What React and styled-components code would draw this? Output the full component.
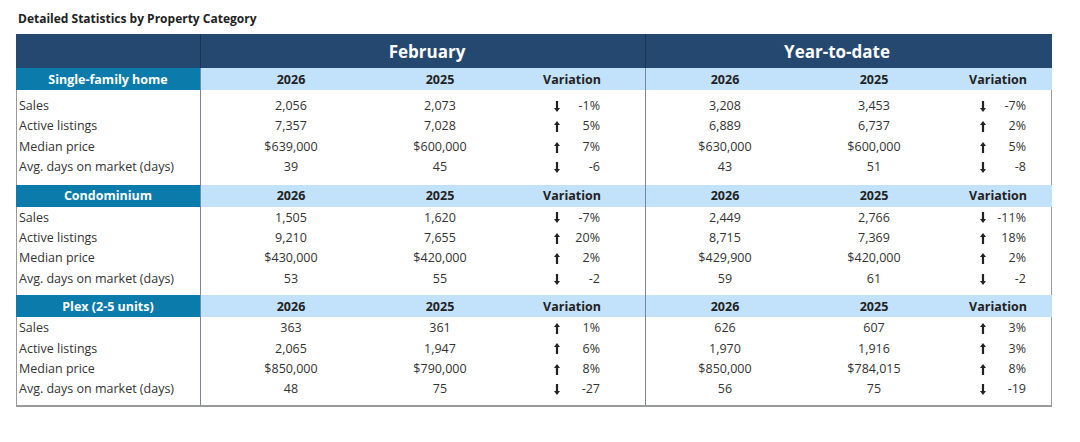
import React from "react";
import styled, { createGlobalStyle } from "styled-components";

const Global = createGlobalStyle`
  html, body { margin: 0; padding: 0; background: #ffffff; }
  body { font-family: "Open Sans", "Noto Sans", sans-serif; color: #333; }
`;

const Page = styled.div`
  padding: 10px 0 0 16px;
`;

const Title = styled.h2`
  margin: 0 0 6px 2px;
  font-size: 12px;
  line-height: 18px;
  font-weight: 700;
  color: #222;
`;

const COLS = "185px 180px 118px 147px 158px 140px 108px";

const Table = styled.div`
  width: 1036px;
  border-left: 1px solid #9a9a9a;
  border-right: 1px solid #9a9a9a;
  border-bottom: 2px solid #9a9a9a;
  box-sizing: border-box;
`;

const Grid = styled.div`
  display: grid;
  grid-template-columns: ${COLS};
  margin: 0 -1px;
`;

const TopCell = styled.div`
  grid-column: ${(p) => p.$span};
  height: 34px;
  background: #254870;
  color: #fff;
  font-size: 17px;
  font-weight: 700;
  display: flex;
  align-items: center;
  justify-content: center;
  padding-left: ${(p) => p.$pl || 0}px;
  padding-right: ${(p) => p.$pr || 0}px;
  border-right: ${(p) => (p.$divider ? "1.5px solid #1a3454" : "none")};
  box-sizing: border-box;
`;

const CatCell = styled.div`
  height: 22px;
  background: #0b7bab;
  color: #fff;
  font-size: 12.5px;
  font-weight: 700;
  display: flex;
  align-items: center;
  justify-content: center;
  border-right: 1.5px solid #7d8594;
  box-sizing: border-box;
`;

const HeadCell = styled.div`
  height: 22px;
  background: #c2e1fb;
  color: #222;
  font-size: 12.5px;
  font-weight: 700;
  display: flex;
  align-items: center;
  justify-content: center;
  border-right: ${(p) => (p.$divider ? "1.5px solid #7d8594" : "none")};
  box-sizing: border-box;
`;

const Cell = styled.div`
  padding-top: ${(p) => p.$pt || 0}px;
  padding-bottom: ${(p) => p.$pb || 0}px;
  line-height: 20.4px;
  font-size: 12.5px;
  color: #333;
  display: flex;
  justify-content: ${(p) => (p.$left ? "flex-start" : "center")};
  padding-left: ${(p) => (p.$left ? "3px" : "0")};
  border-right: ${(p) => (p.$divider ? "1.5px solid #7d8594" : "none")};
  white-space: nowrap;
`;

const VarBox = styled.div`
  width: 46px;
  margin-left: 10px;
  display: flex;
  align-items: center;
  justify-content: space-between;
`;

const Arrow = ({ up }) => (
  <svg width="6" height="11" viewBox="0 0 6 11" style={{ display: "block" }}>
    {up ? (
      <path d="M3 0 L6 4 L4.1 4 L4.1 11 L1.9 11 L1.9 4 L0 4 Z" fill="#222" />
    ) : (
      <path d="M3 11 L6 7 L4.1 7 L4.1 0 L1.9 0 L1.9 7 L0 7 Z" fill="#222" />
    )}
  </svg>
);

const Variation = ({ v, divider, pt, pb }) => {
  const up = !v.startsWith("-");
  return (
    <Cell $divider={divider} $pt={pt} $pb={pb}>
      <VarBox>
        <Arrow up={up} />
        <span>{v}</span>
      </VarBox>
    </Cell>
  );
};

const sections = [
  {
    name: "Single-family home",
    pt: 6,
    pb: 7,
    rows: [
      ["Sales", "2,056", "2,073", "-1%", "3,208", "3,453", "-7%"],
      ["Active listings", "7,357", "7,028", "5%", "6,889", "6,737", "2%"],
      ["Median price", "$639,000", "$600,000", "7%", "$630,000", "$600,000", "5%"],
      ["Avg. days on market (days)", "39", "45", "-6", "43", "51", "-8"],
    ],
  },
  {
    name: "Condominium",
    pt: 1,
    pb: 6,
    rows: [
      ["Sales", "1,505", "1,620", "-7%", "2,449", "2,766", "-11%"],
      ["Active listings", "9,210", "7,655", "20%", "8,715", "7,369", "18%"],
      ["Median price", "$430,000", "$420,000", "2%", "$429,900", "$420,000", "2%"],
      ["Avg. days on market (days)", "53", "55", "-2", "59", "61", "-2"],
    ],
  },
  {
    name: "Plex (2-5 units)",
    pt: 1,
    pb: 5,
    rows: [
      ["Sales", "363", "361", "1%", "626", "607", "3%"],
      ["Active listings", "2,065", "1,947", "6%", "1,970", "1,916", "3%"],
      ["Median price", "$850,000", "$790,000", "8%", "$850,000", "$784,015", "8%"],
      ["Avg. days on market (days)", "48", "75", "-27", "56", "75", "-19"],
    ],
  },
];

const Section = ({ s }) => (
  <Grid>
    <CatCell>{s.name}</CatCell>
    <HeadCell>2026</HeadCell>
    <HeadCell>2025</HeadCell>
    <HeadCell $divider>Variation</HeadCell>
    <HeadCell>2026</HeadCell>
    <HeadCell>2025</HeadCell>
    <HeadCell>Variation</HeadCell>
    {s.rows.map((r, i) => {
      const pt = i === 0 ? s.pt : 0;
      const pb = i === s.rows.length - 1 ? s.pb : 0;
      return (
        <React.Fragment key={r[0]}>
          <Cell $left $divider $pt={pt} $pb={pb}>{r[0]}</Cell>
          <Cell $pt={pt} $pb={pb}>{r[1]}</Cell>
          <Cell $pt={pt} $pb={pb}>{r[2]}</Cell>
          <Variation v={r[3]} divider pt={pt} pb={pb} />
          <Cell $pt={pt} $pb={pb}>{r[4]}</Cell>
          <Cell $pt={pt} $pb={pb}>{r[5]}</Cell>
          <Variation v={r[6]} pt={pt} pb={pb} />
        </React.Fragment>
      );
    })}
  </Grid>
);

export default function App() {
  return (
    <Page>
      <Global />
      <Title>Detailed Statistics by Property Category</Title>
      <Table>
        <Grid>
          <TopCell $span="1 / 2" $divider />
          <TopCell $span="2 / 5" $divider $pl={8}>February</TopCell>
          <TopCell $span="5 / 8" $pr={24}>Year-to-date</TopCell>
        </Grid>
        {sections.map((s) => (
          <Section key={s.name} s={s} />
        ))}
      </Table>
    </Page>
  );
}
